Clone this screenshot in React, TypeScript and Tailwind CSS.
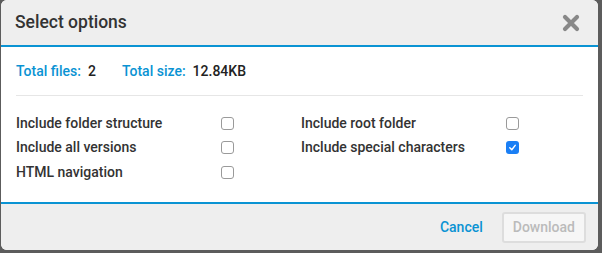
import { useState } from "react";

const options = [
  { id: "folder", label: "Include folder structure", checked: false },
  { id: "root", label: "Include root folder", checked: false },
  { id: "versions", label: "Include all versions", checked: false },
  { id: "special", label: "Include special characters", checked: true },
  { id: "html", label: "HTML navigation", checked: false },
];

function Check({ on, onClick }: { on: boolean; onClick: () => void }) {
  return (
    <button
      onClick={onClick}
      className={`grid h-[13px] w-[13px] place-items-center rounded-[3px] ${on ? "bg-[#1a7ff5]" : "border border-[#9a9a9a] bg-white"}`}
    >
      {on && (
        <svg width="9" height="9" viewBox="0 0 10 10">
          <path d="M2 5.3 L4.2 7.5 L8 2.6" fill="none" stroke="white" strokeWidth="1.6" strokeLinecap="round" strokeLinejoin="round" />
        </svg>
      )}
    </button>
  );
}

export default function App() {
  const [checked, setChecked] = useState<Record<string, boolean>>(
    Object.fromEntries(options.map((o) => [o.id, o.checked]))
  );

  return (
    <main className="h-[253px] w-[602px] overflow-hidden bg-[#5c5c5c] pl-[1px] pr-[4px] pb-[3px] font-['Roboto','Liberation_Sans',sans-serif]">
      <div className="flex h-full flex-col overflow-hidden rounded-[6px] bg-white">
        {/* header */}
        <header className="flex h-[47px] shrink-0 items-center justify-between border-b-2 border-[#0a93d3] bg-[#eeeeee] pl-[14px] pr-[18px]">
          <h1 className="text-[17.5px] font-medium text-[#333333]">Select options</h1>
          <button className="text-[#888888]">
            <svg width="18" height="18" viewBox="0 0 18 18">
              <path d="M3 3 L15 15 M15 3 L3 15" stroke="currentColor" strokeWidth="4.2" strokeLinecap="round" />
            </svg>
          </button>
        </header>

        {/* body */}
        <section className="flex-1 px-[15px]">
          <div className="flex h-[49px] items-center gap-[26px] border-b border-[#e6e6e6] text-[14px] font-medium">
            <div className="flex items-center gap-[7px]">
              <span className="text-[#0a93d3]">Total files:</span>
              <span className="text-[#222222]">2</span>
            </div>
            <div className="flex items-center gap-[7px]">
              <span className="text-[#0a93d3]">Total size:</span>
              <span className="text-[#222222]">12.84KB</span>
            </div>
          </div>

          <div className="grid grid-cols-[285px_1fr] gap-y-[6.5px] pt-[18px] text-[14px] font-medium text-[#333333]">
            {options.map((o) => (
              <label key={o.id} className="flex h-[18px] items-center">
                <span className="w-[205px]">{o.label}</span>
                <Check on={checked[o.id]} onClick={() => setChecked((c) => ({ ...c, [o.id]: !c[o.id] }))} />
              </label>
            ))}
          </div>
        </section>

        {/* footer */}
        <footer className="flex h-[48px] shrink-0 items-center justify-end gap-[19px] border-t-2 border-[#0a93d3] bg-[#eeeeee] pr-[12px]">
          <button className="text-[14px] font-medium text-[#0a93d3]">Cancel</button>
          <button className="h-[31px] rounded-[3px] border-2 border-[#dddddd] bg-[#f6f6f6] px-[9px] text-[14px] font-medium text-[#bbbbbb]">
            Download
          </button>
        </footer>
      </div>
    </main>
  );
}
